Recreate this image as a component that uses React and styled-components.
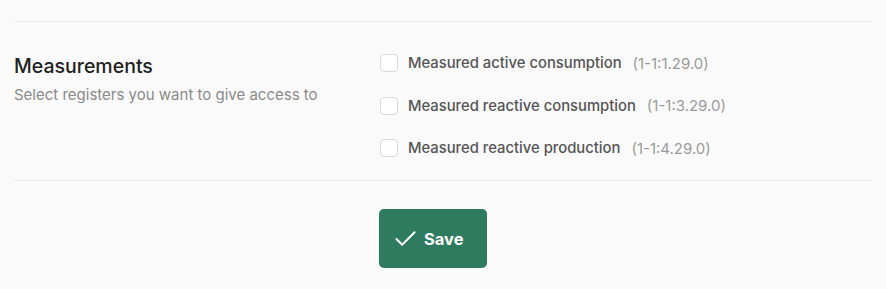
import { styled, createGlobalStyle } from "styled-components";

const GlobalStyle = createGlobalStyle`
  body {
    margin: 0;
    background: #fafafa;
    font-family: Inter, "Noto Sans", sans-serif;
  }
`;

const registers = [
  { label: "Measured active consumption", code: "(1-1:1.29.0)" },
  { label: "Measured reactive consumption", code: "(1-1:3.29.0)" },
  { label: "Measured reactive production", code: "(1-1:4.29.0)" },
];

const App = () => {
  return (
    <>
      <GlobalStyle />
      <Page>
        <Divider />
        <Section>
          <Intro>
            <Title>Measurements</Title>
            <Subtitle>Select registers you want to give access to</Subtitle>
          </Intro>
          <Options>
            {registers.map((r) => (
              <Option key={r.code}>
                <Box type="checkbox" />
                <Label>{r.label}</Label>
                <Code>{r.code}</Code>
              </Option>
            ))}
          </Options>
        </Section>
        <Divider />
        <Footer>
          <SaveButton>
            <svg width="23" height="23" viewBox="0 0 24 24" fill="none" stroke="#fff" strokeWidth="2" strokeLinecap="round" strokeLinejoin="round">
              <polyline points="2.5 12.5 8.5 18.5 21.5 5.5" />
            </svg>
            Save
          </SaveButton>
        </Footer>
      </Page>
    </>
  );
};

const Page = styled.div`
  padding: 21px 13px 0 14px;
`;

const Divider = styled.div`
  height: 1px;
  background: #e8e8e8;
`;

const Section = styled.div`
  display: flex;
  padding: 32px 0 23px;
`;

const Intro = styled.div`
  width: 366px;
  display: flex;
  flex-direction: column;
`;

const Title = styled.h3`
  margin: 0;
  font-size: 19.5px;
  font-weight: 500;
  color: #222;
  line-height: 24px;
`;

const Subtitle = styled.p`
  margin: 8px 0 0;
  font-size: 15px;
  color: #8a8a8a;
  line-height: 18px;
`;

const Options = styled.div`
  display: flex;
  flex-direction: column;
  gap: 24.5px;
`;

const Option = styled.label`
  display: flex;
  align-items: center;
  height: 18px;
`;

const Box = styled.input`
  appearance: none;
  margin: 0 10px 0 0;
  width: 18px;
  height: 18px;
  border: 1px solid #d9d9d9;
  border-radius: 4px;
  background: #fff;
  box-sizing: border-box;
`;

const Label = styled.span`
  font-size: 14.8px;
  font-weight: 500;
  color: #555;
`;

const Code = styled.span`
  margin-left: 11px;
  font-size: 15px;
  color: #9a9a9a;
`;

const Footer = styled.div`
  padding: 28px 0 0 365px;
`;

const SaveButton = styled.button`
  display: flex;
  align-items: center;
  gap: 7px;
  width: 108px;
  height: 59px;
  padding: 0 0 0 15px;
  border: none;
  border-radius: 5px;
  background: #2f7b5f;
  color: #fff;
  font-family: Inter, sans-serif;
  font-size: 16.5px;
  font-weight: 700;
`;

export default App;
